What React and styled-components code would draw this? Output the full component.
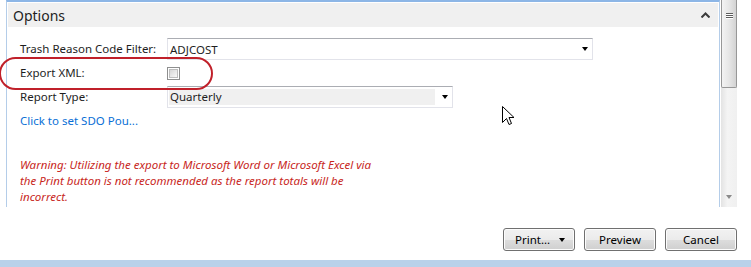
import React from 'react';
import styled, { createGlobalStyle } from 'styled-components';

const GlobalStyle = createGlobalStyle`
  body {
    margin: 0;
    font-family: "Noto Sans", "Open Sans", sans-serif;
    font-size: 11.5px;
    color: #1e1e1e;
  }
`;

const Window = styled.div`
  position: relative;
  width: 751px;
  height: 267px;
  background: #ffffff;
  border-bottom: 7px solid #b9d1ea;
  box-sizing: border-box;
  display: flex;
  flex-direction: column;
  overflow: hidden;
`;

const TopArea = styled.div`
  height: 207px;
  display: flex;
  padding-left: 6px;
`;

const Panel = styled.div`
  flex: 1;
  border: 1px solid #b4cde9;
  border-top: 2px solid #8db6e6;
  border-bottom: none;
  padding: 1px 1px 0 1px;
  display: flex;
  flex-direction: column;
  overflow: hidden;
`;

const Header = styled.div`
  height: 24px;
  background: #f0f0f0;
  display: flex;
  align-items: center;
  justify-content: space-between;
  padding: 0 8px 0 5px;
  font-size: 14px;
  color: #1e1e1e;
`;

const Body = styled.div`
  padding: 11px 12px 0 12px;
  display: flex;
  flex-direction: column;
`;

const FieldGrid = styled.div`
  display: grid;
  grid-template-columns: 147px auto;
  grid-auto-rows: 22px;
  row-gap: 2px;
  align-items: center;
`;

const Label = styled.div`
  line-height: 22px;
`;

const TextBox = styled.div`
  width: ${p => p.width}px;
  height: 22px;
  box-sizing: border-box;
  border: 1px solid #e2e3ea;
  border-top-color: #abadb3;
  display: flex;
  align-items: center;
  justify-content: space-between;
  padding: 0 4px 0 2px;
`;

const SelectBox = styled.div`
  width: ${p => p.width}px;
  height: 22px;
  box-sizing: border-box;
  border: 1px solid #e2e3ea;
  border-top-color: #abadb3;
  display: flex;
  align-items: center;
  padding: 2px 4px 2px 1px;
`;

const SelectValue = styled.div`
  flex: 1;
  height: 16px;
  line-height: 16px;
  background: #f0f0f0;
  padding-left: 1px;
  margin-right: 7px;
`;

const Arrow = styled.span`
  width: 0;
  height: 0;
  border-left: 3.5px solid transparent;
  border-right: 3.5px solid transparent;
  border-top: 4px solid ${p => p.color || '#000'};
  display: inline-block;
`;

const CheckBox = styled.div`
  width: 13px;
  height: 13px;
  box-sizing: border-box;
  border: 1px solid #8e8f8f;
  padding: 1px;
  margin-top: 1px;
  &::after {
    content: '';
    display: block;
    width: 100%;
    height: 100%;
    box-sizing: border-box;
    border: 1px solid #bdbdbd;
    background: linear-gradient(135deg, #d6d6d6, #f8f8f8);
  }
`;

const LinkText = styled.a`
  color: #0a6fd6;
  text-decoration: none;
  line-height: 16px;
  margin-top: 5px;
`;

const Warning = styled.p`
  margin: 28px 0 0 0;
  width: 365px;
  color: #c8271d;
  font-style: italic;
  line-height: 16px;
`;

const ScrollColumn = styled.div`
  width: 16px;
  margin-left: 1px;
  display: flex;
  flex-direction: column;
  background: linear-gradient(90deg, #e3e3e3, #f4f4f4 40%, #f0f0f0);
`;

const Thumb = styled.div`
  height: 88px;
  box-sizing: border-box;
  border: 1px solid #979797;
  border-top: none;
  border-radius: 0 0 2px 2px;
  background: linear-gradient(90deg, #f3f3f3, #e6e6e6 50%, #d3d3d3);
  display: flex;
  flex-direction: column;
  align-items: center;
  padding-top: 13px;
  gap: 1px;
`;

const GripLine = styled.div`
  width: 7px;
  height: 1px;
  background: #5d5d5d;
  box-shadow: 0 1px 0 #ffffff;
`;

const Track = styled.div`
  flex: 1;
  display: flex;
  align-items: flex-end;
  justify-content: center;
  padding-bottom: 8px;
`;

const RightGap = styled.div`
  width: 14px;
`;

const Footer = styled.div`
  flex: 1;
  display: flex;
  justify-content: flex-end;
  align-items: flex-start;
  gap: 9px;
  padding: 21px 14px 0 0;
`;

const Button = styled.button`
  width: 72px;
  height: 23px;
  box-sizing: border-box;
  border: 1px solid #707070;
  border-radius: 3px;
  background: linear-gradient(#f2f2f2 0%, #ebebeb 50%, #dddddd 51%, #cfcfcf 100%);
  box-shadow: inset 0 0 0 1px #fcfcfc;
  font-family: "Noto Sans", "Open Sans", sans-serif;
  font-size: 11.5px;
  color: #000;
  display: flex;
  align-items: center;
  justify-content: ${p => (p.split ? 'space-between' : 'center')};
  padding: ${p => (p.split ? '0 9px 0 11px' : '0')};
`;

const Ellipse = styled.div`
  position: absolute;
  left: -1px;
  top: 57px;
  width: 214px;
  height: 33px;
  box-sizing: border-box;
  border: 2px solid #c0202a;
  border-radius: 17px;
  pointer-events: none;
`;

const Cursor = styled.svg`
  position: absolute;
  left: 502px;
  top: 106px;
`;

function ChevronUp() {
  return (
    <svg width="9" height="6" viewBox="0 0 9 6">
      <path d="M0.5 5.5 L4.5 1.5 L8.5 5.5" fill="none" stroke="#3c3c3c" strokeWidth="2" />
    </svg>
  );
}

export default function App() {
  return (
    <>
      <GlobalStyle />
      <Window>
        <TopArea>
          <Panel>
            <Header>
              <span>Options</span>
              <ChevronUp />
            </Header>
            <Body>
              <FieldGrid>
                <Label>Trash Reason Code Filter:</Label>
                <TextBox width={426}>
                  <span>ADJCOST</span>
                  <Arrow />
                </TextBox>
                <Label>Export XML:</Label>
                <CheckBox />
                <Label>Report Type:</Label>
                <SelectBox width={286}>
                  <SelectValue>Quarterly</SelectValue>
                  <Arrow />
                </SelectBox>
              </FieldGrid>
              <LinkText href="#">Click to set SDO Pou...</LinkText>
              <Warning>
                Warning: Utilizing the export to Microsoft Word or Microsoft Excel via the Print
                button is not recommended as the report totals will be incorrect.
              </Warning>
            </Body>
          </Panel>
          <ScrollColumn>
            <Thumb>
              <GripLine />
              <GripLine />
              <GripLine />
            </Thumb>
            <Track>
              <Arrow color="#8a8a8a" />
            </Track>
          </ScrollColumn>
          <RightGap />
        </TopArea>
        <Footer>
          <Button split>
            <span>Print...</span>
            <Arrow />
          </Button>
          <Button>Preview</Button>
          <Button>Cancel</Button>
        </Footer>
        <Ellipse />
        <Cursor width="13" height="20" viewBox="0 0 13 20">
          <path
            d="M0.5 0.5 L0.5 16.5 L4.5 12.5 L7 18.5 L9.5 17.5 L7 11.5 L12 11.5 Z"
            fill="#ffffff"
            stroke="#000000"
            strokeWidth="1"
            strokeLinejoin="miter"
          />
        </Cursor>
      </Window>
    </>
  );
}
